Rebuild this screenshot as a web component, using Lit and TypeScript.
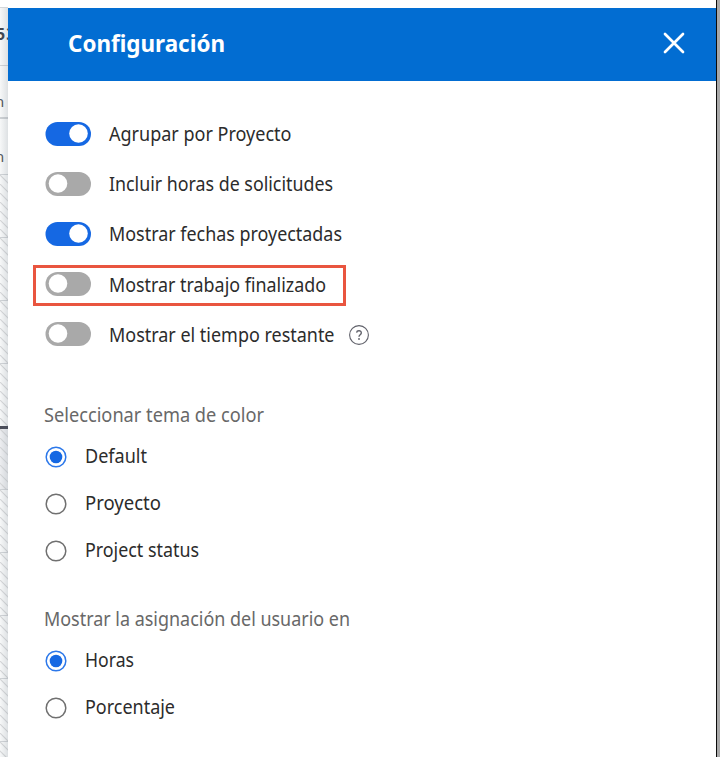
import { LitElement, html, css, svg } from "lit";
import { customElement, property } from "lit/decorators.js";

/** A line of text fitted to a fixed advance width. */
@customElement("fit-text")
class FitText extends LitElement {
  @property() text = "";
  @property({ type: Number }) width = 100;
  @property({ type: Number }) baseline = 18;
  static styles = css`
    :host { display: block; flex: none; height: 26px; }
    .line { display: block; height: 26px; overflow: visible; font-family: "Noto Sans", "Open Sans", sans-serif; fill: currentColor; }
  `;
  render() {
    return html`<svg class="line" width=${this.width} height="26">${svg`<text x="0" y=${this.baseline} textLength=${this.width} lengthAdjust="spacingAndGlyphs">${this.text}</text>`}</svg>`;
  }
}

interface Toggle { label: string; width: number; on?: boolean; marked?: boolean; help?: boolean; base: number; }
interface Option { label: string; width: number; on?: boolean; base: number; }

const toggles: Toggle[] = [
  { label: "Agrupar por Proyecto", width: 182.5, on: true, base: 20 },
  { label: "Incluir horas de solicitudes", width: 224, base: 20 },
  { label: "Mostrar fechas proyectadas", width: 233, on: true, base: 20 },
  { label: "Mostrar trabajo finalizado", width: 217, marked: true, base: 20.5 },
  { label: "Mostrar el tiempo restante", width: 225.5, help: true, base: 21 },
];
const themes: Option[] = [
  { label: "Default", width: 62, on: true, base: 19 },
  { label: "Proyecto", width: 76, base: 19 },
  { label: "Project status", width: 114, base: 19 },
];
const units: Option[] = [
  { label: "Horas", width: 49, on: true, base: 19 },
  { label: "Porcentaje", width: 90, base: 19 },
];

@customElement("app-root")
class AppRoot extends LitElement {
  static styles = css`
    :host { display: block; height: 757px; overflow: hidden; background: #fff; color: #2c2c2c; font-family: "Noto Sans", sans-serif; font-size: 19px; }
    .window { display: grid; grid-template-columns: 8px 708px 1px 3px; height: 757px; }
    .behind { display: flex; flex-direction: column; padding-top: 7px; overflow: hidden; position: relative; background: #fff; }
    .behind::after { content: ""; position: absolute; inset: 8px 0 0; background: linear-gradient(to right, rgba(80,95,110,.02), rgba(80,95,110,.17)); }
    .cell { flex: none; box-sizing: border-box; border-top: 1px solid #d3d6d9; background: #fafbfb; overflow: hidden; color: #42464e; }
    .c1 { height: 58px; }
    .c2 { height: 52px; }
    .c3 { height: 57px; border-top: 2px solid #d0d3d6; }
    .day { height: 63px; }
    .now { border-top: 3px solid #4b4d59; background: #f0f1f3; }
    .cut { display: block; }
    .panel { margin-top: 8px; background: #fff; overflow: hidden; }
    .header { display: flex; align-items: center; justify-content: space-between; height: 73px; box-sizing: border-box; padding: 0 30px 3px 60px; background: #026dd2; color: #fff; font-size: 23.5px; font-weight: 700; }
    .close { display: block; }
    .toggles { padding: 28px 0 0 37px; }
    .toggle { display: flex; align-items: center; height: 50px; }
    .toggle.marked { position: relative; }
    .toggle.marked::before { content: ""; position: absolute; left: -12px; top: 6px; width: 313px; height: 41px; box-sizing: border-box; border: 3px solid #e9553f; }
    .switch { display: block; flex: none; margin-right: 18px; }
    .help { display: block; margin: 1px 0 0 13.5px; }
    .section { margin: 0 0 0 36px; }
    .heading { color: #686868; display: flex; }
    .theme { padding-top: 43px; }
    .theme .heading { padding-bottom: 5px; }
    .unit { padding-top: 35px; }
    .unit .heading { padding-bottom: 2px; }
    .option { display: flex; align-items: center; height: 47px; }
    .radio { display: block; margin: 0 18px 0 1px; flex: none; }
    .frame { background: #0b0b0b; }
    .outside { background: #a8a8a8; }
  `;

  private hatch() {
    return html`<svg class="cut" width="8" height="62">${Array.from({ length: 9 }, (_, i) =>
      svg`<path d=${`M-1 ${i * 9 - 10}l10 10`} stroke="#d8d9da" stroke-width="1.2" />`)}</svg>`;
  }

  private toggle(t: Toggle) {
    return html`<div class="toggle ${t.marked ? "marked" : ""}">
      <svg class="switch" width="46" height="24" role="switch" aria-checked=${t.on ? "true" : "false"} aria-label=${t.label}>
        <rect x=".5" width="45.5" height="24" rx="12" fill=${t.on ? "#1568e3" : "#a9a9a9"} />
        <circle cx=${t.on ? 33.5 : 13} cy="11.5" r="9.3" fill="#fff" />
      </svg>
      <fit-text .text=${t.label} .width=${t.width} .baseline=${t.base}></fit-text>
      ${t.help ? html`<svg class="help" width="22" height="22" fill="none" stroke="#60616a" stroke-width="1.1">
        <circle cx="11" cy="11" r="9.4" />
        <path d="M8.6 8.6C8.9 6.1 13.4 6.1 13.3 8.9C13.2 10.7 11 10.7 11 12.7" stroke-width="1.4" />
        <circle cx="11" cy="15" r=".9" fill="#60616a" stroke="none" />
      </svg>` : ""}
    </div>`;
  }

  private option(o: Option) {
    return html`<div class="option">
      <svg class="radio" width="22" height="22" fill="none" role="radio" aria-checked=${o.on ? "true" : "false"} aria-label=${o.label}>
        <circle cx="11" cy="11" r="9.8" stroke=${o.on ? "#2c78ea" : "#707070"} stroke-width="1.5" />
        ${o.on ? svg`<circle cx="11" cy="11" r="6.3" fill="#1568e3" />` : ""}
      </svg>
      <fit-text .text=${o.label} .width=${o.width} .baseline=${o.base}></fit-text>
    </div>`;
  }

  render() {
    return html`<div class="window">
      <div class="behind">
        <div class="cell c1"><svg class="cut" width="8" height="56"><text x="-4" y="32" font-size="16" font-weight="700" letter-spacing="1.2" fill="#42464e">53</text></svg></div>
        <div class="cell c2"><svg class="cut" width="8" height="50"><text x="-5" y="41" font-size="15" fill="#555961">n</text></svg></div>
        <div class="cell c3"><svg class="cut" width="8" height="54"><text x="-5" y="43" font-size="15" fill="#555961">n</text></svg></div>
        ${Array.from({ length: 10 }, (_, i) => html`<div class="cell day ${i === 4 ? "now" : ""}">${this.hatch()}</div>`)}
      </div>
      <div class="panel">
        <div class="header">
          <fit-text .text=${"Configuración"} .width=${157} .baseline=${21.5}></fit-text>
          <svg class="close" width="24" height="24" fill="none" stroke="#fff" stroke-width="2.7" stroke-linecap="round"><path d="M3 3L21 21M21 3L3 21" /></svg>
        </div>
        <div class="toggles">${toggles.map((t) => this.toggle(t))}</div>
        <div class="section theme">
          <div class="heading"><fit-text .text=${"Seleccionar tema de color"} .width=${220} .baseline=${20}></fit-text></div>
          ${themes.map((o) => this.option(o))}
        </div>
        <div class="section unit">
          <div class="heading"><fit-text .text=${"Mostrar la asignación del usuario en"} .width=${306} .baseline=${17.4}></fit-text></div>
          ${units.map((o) => this.option(o))}
        </div>
      </div>
      <div class="frame"></div>
      <div class="outside"></div>
    </div>`;
  }
}
